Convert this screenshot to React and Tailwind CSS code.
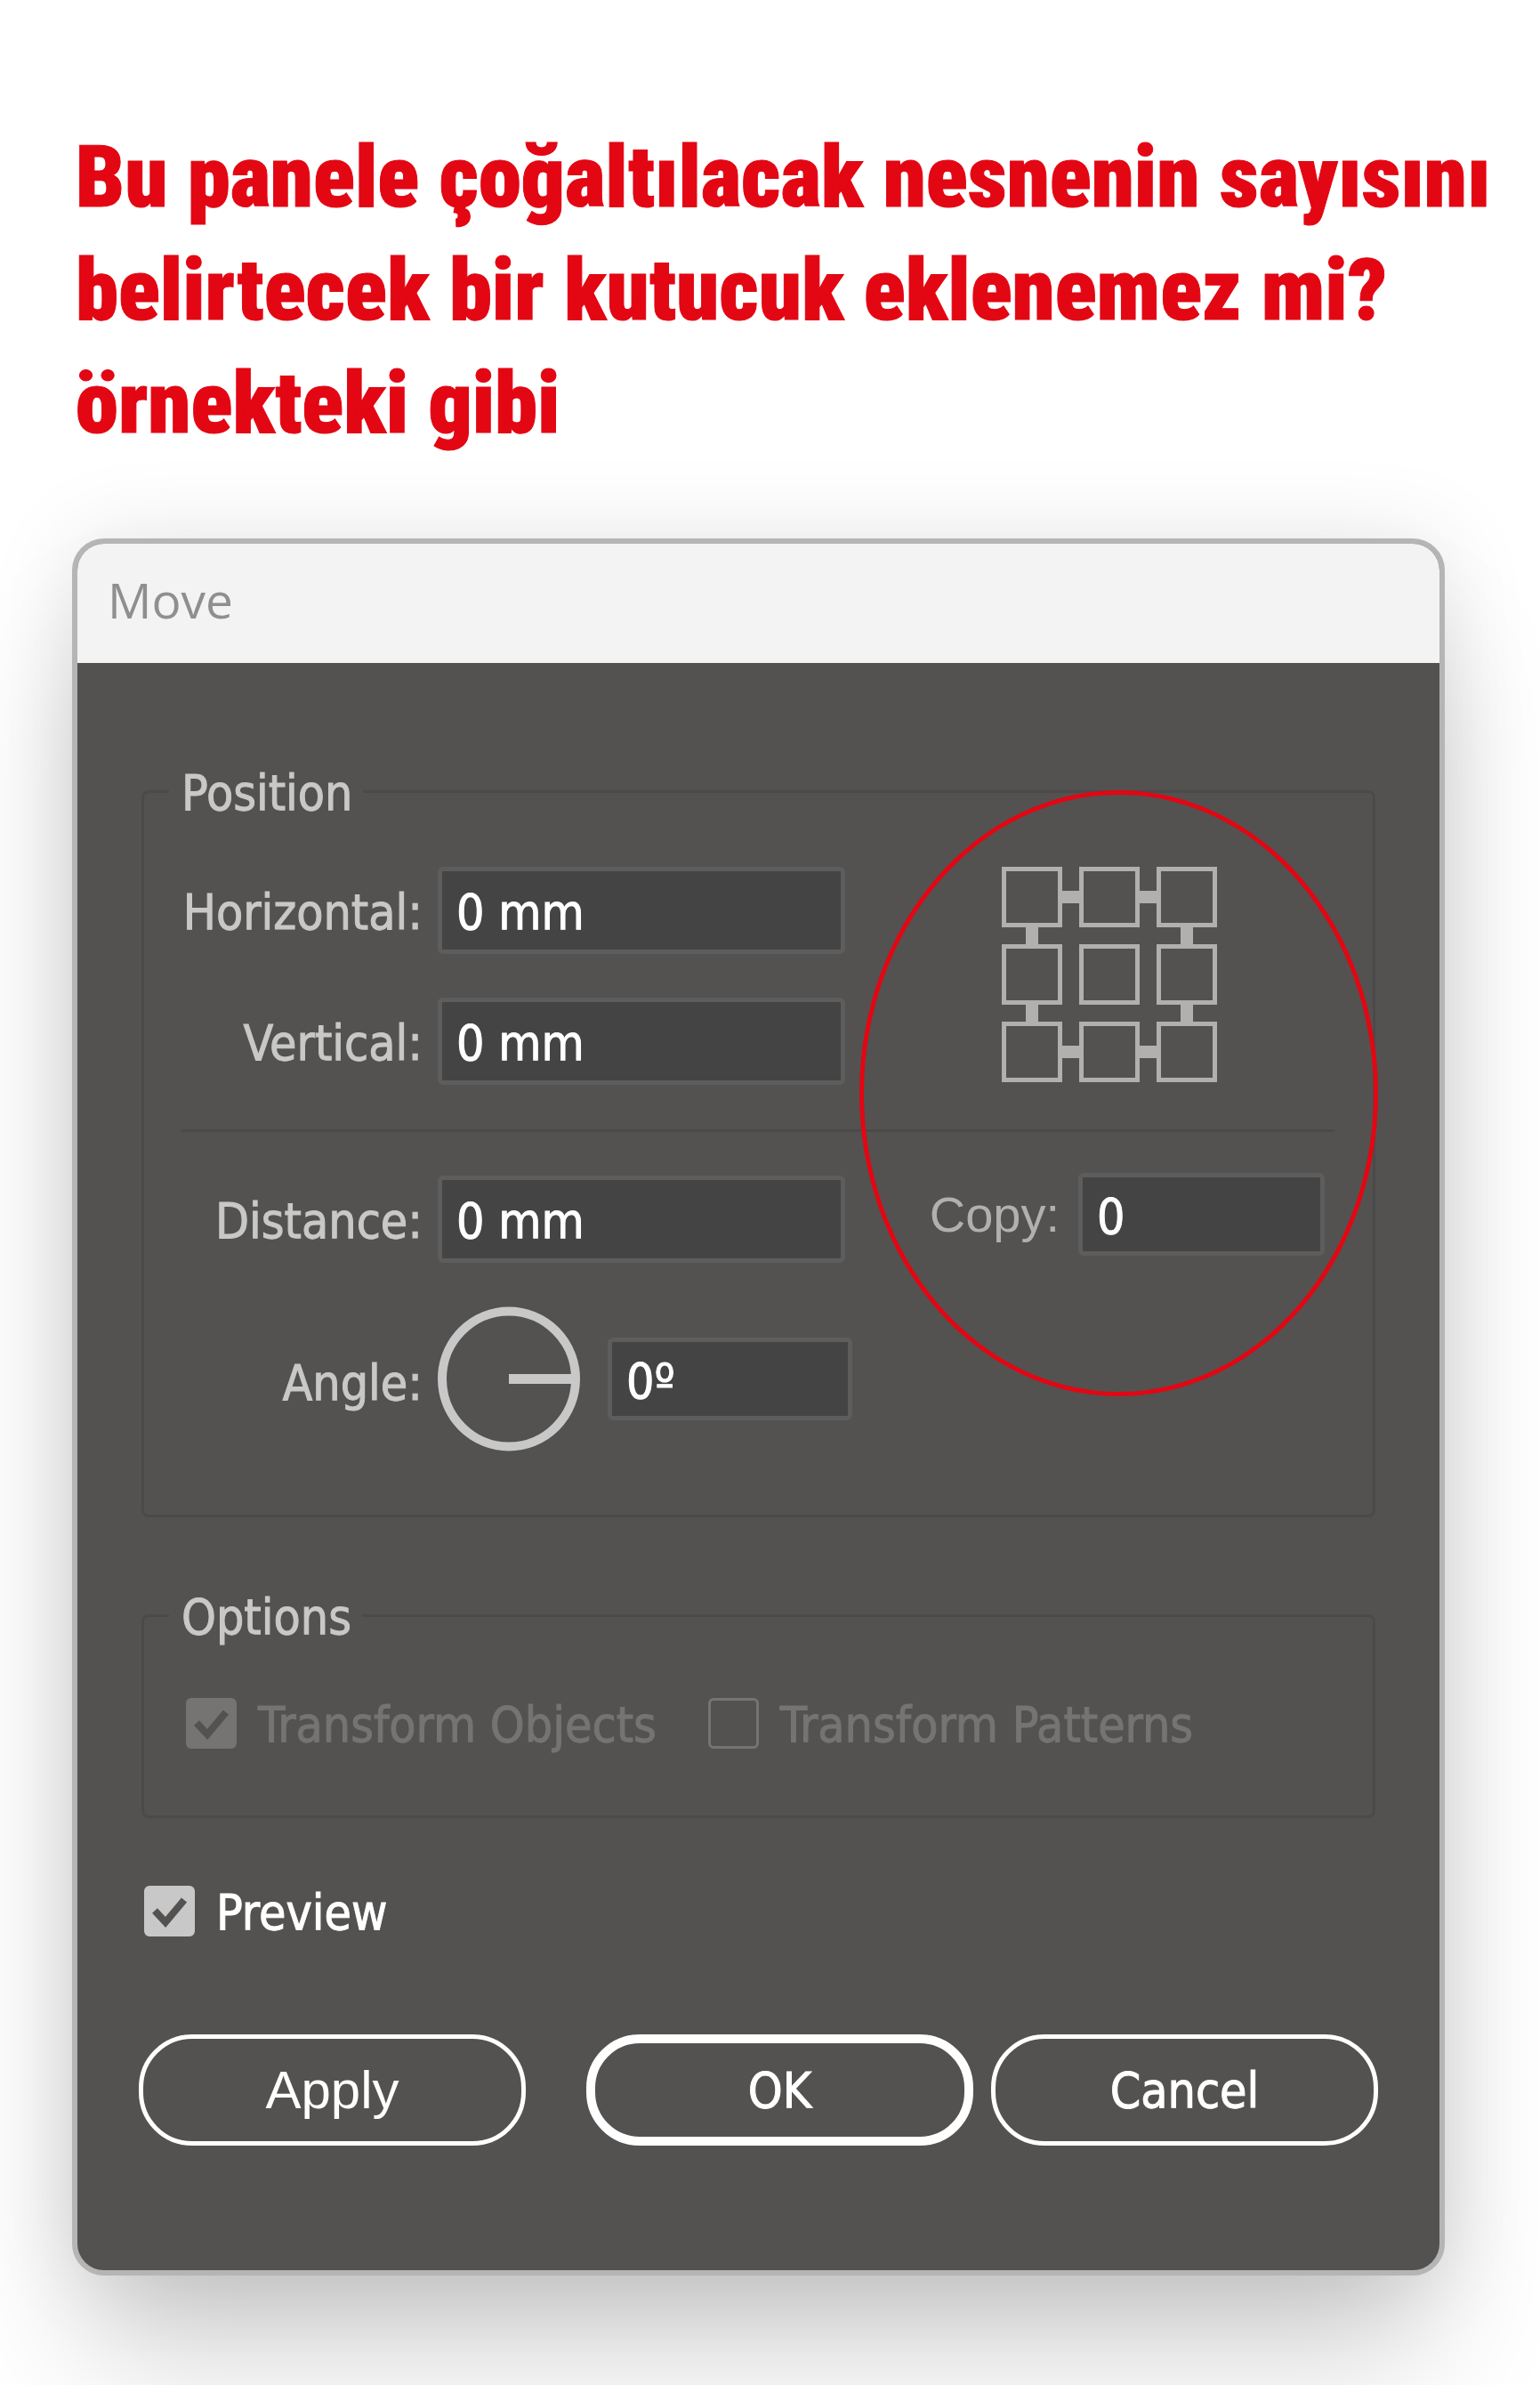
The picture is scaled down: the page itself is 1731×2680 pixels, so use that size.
import { useState } from "react";

const INPUT_CLASS = "min-w-0 rounded-md border-[5px] border-[#5d5d5d] bg-[#444444] pl-4 pt-1 text-white outline-none";

const Field = ({ id, label, value, onChange }) => {
    return (
        <div className="flex items-center gap-[17px]">
            <label htmlFor={id} className="w-[271px] pt-1 text-right">{label}</label>
            <input
                id={id}
                type="text"
                value={value}
                onChange={(e) => onChange(e.target.value)}
                className={`h-[98px] w-[458px] ${INPUT_CLASS}`}
            />
        </div>
    );
};

const Checkbox = ({ id, label, checked, onChange, disabled }) => {
    return (
        <div className={disabled ? "flex items-center gap-[24px] text-[#757473]" : "flex items-center gap-[24px] text-white"}>
            <span className="grid size-[57px] shrink-0">
                <input
                    id={id}
                    type="checkbox"
                    checked={checked}
                    disabled={disabled}
                    onChange={(e) => onChange(e.target.checked)}
                    className="col-start-1 row-start-1 size-full appearance-none rounded-md border-[3px] border-[#c8c8c8] checked:bg-[#c8c8c8] disabled:border-[#757473] disabled:checked:bg-[#757473]"
                />
                {checked && (
                    <svg viewBox="0 0 57 57" className="pointer-events-none col-start-1 row-start-1 size-full" aria-hidden="true">
                        <path d="M12 28 L24 41 L45 16" fill="none" stroke="#535250" strokeWidth="8" />
                    </svg>
                )}
            </span>
            <label htmlFor={id} className="pt-1 whitespace-nowrap">{label}</label>
        </div>
    );
};

// 3x3 reference point grid, outer squares are linked together
const AnchorGrid = () => {
    const steps = [0, 87, 174];
    return (
        <svg viewBox="0 0 242 242" className="size-[242px] shrink-0" aria-hidden="true">
            {steps.map((y) =>
                steps.map((x) => (
                    <rect key={`${x}-${y}`} x={x + 2.5} y={y + 2.5} width="63" height="63" fill="none" stroke="#b2b0af" strokeWidth="5" />
                ))
            )}
            {[0, 174].map((a) =>
                [68, 155].map((b) => (
                    <g key={`${a}-${b}`} fill="#b2b0af">
                        <rect x={b} y={a + 27} width="19" height="14" />
                        <rect x={a + 27} y={b} width="14" height="19" />
                    </g>
                ))
            )}
        </svg>
    );
};

const AngleDial = () => (
    <svg viewBox="0 0 160 163" className="h-[163px] w-[160px] shrink-0" aria-hidden="true">
        <ellipse cx="80" cy="81.5" rx="75" ry="76" fill="none" stroke="#c8c8c8" strokeWidth="10" />
        <rect x="80" y="76" width="76" height="11" fill="#c8c8c8" />
    </svg>
);

const Legend = ({ children }) => (
    <legend className="ml-[28px] pt-1 pl-[14px] pr-[12px]">{children}</legend>
);

const MoveDialog = () => {
    const [values, setValues] = useState({
        horizontal: "0 mm",
        vertical: "0 mm",
        distance: "0 mm",
        angle: "0º",
        copy: "0",
    });
    const [preview, setPreview] = useState(true);

    const update = (key) => (value) => setValues({ ...values, [key]: value });

    return (
        <section className="overflow-hidden rounded-[36px] border-[6px] border-[#b5b5b5] bg-[#535250] shadow-[0_0_100px_rgba(0,0,0,0.1),0_100px_150px_-20px_rgba(0,0,0,0.2)]">
            <header className="flex h-[134px] items-center bg-[#f3f3f3] px-[34px] pb-2">
                <h2 className="font-['Open_Sans',sans-serif] text-[55px] leading-[60px] text-[#8f8f8f]">Move</h2>
            </header>

            <form
                onSubmit={(e) => e.preventDefault()}
                className="px-[72px] pt-[112px] pb-[140px] font-['DejaVu_Sans_Condensed','DejaVu_Sans',sans-serif] text-[55px] leading-[60px] text-[#c8c8c8] [-webkit-text-stroke:1px_currentColor]"
            >
                {/* Position */}
                <fieldset className="relative rounded-lg border-[3px] border-[#4b4a49]">
                    <Legend>Position</Legend>
                    <div className="pt-[53px] pr-[43px] pb-[71px] pl-[42px]">
                        <div className="flex items-start justify-between">
                            <div className="flex flex-col gap-[49px]">
                                <Field id="horizontal" label="Horizontal:" value={values.horizontal} onChange={update("horizontal")} />
                                <Field id="vertical" label="Vertical:" value={values.vertical} onChange={update("vertical")} />
                            </div>
                            <div className="pr-[132px]">
                                <AnchorGrid />
                            </div>
                        </div>

                        <hr className="mt-[50px] border-t-[3px] border-[#4b4a49]" />

                        <div className="flex items-start justify-between pt-[46px]">
                            <div className="pt-[3px]">
                                <Field id="distance" label="Distance:" value={values.distance} onChange={update("distance")} />
                            </div>
                            <div className="flex items-center gap-[21px] pr-[11px]">
                                <label htmlFor="copy" className="font-['Liberation_Sans',Arial,sans-serif] text-[56px] text-[#b2b0af] [-webkit-text-stroke:0]">Copy:</label>
                                <input
                                    id="copy"
                                    type="text"
                                    value={values.copy}
                                    onChange={(e) => update("copy")(e.target.value)}
                                    className={`h-[93px] w-[277px] ${INPUT_CLASS}`}
                                />
                            </div>
                        </div>

                        <div className="flex items-center gap-[17px] pt-[49px]">
                            <label htmlFor="angle" className="w-[271px] pt-2 text-right">Angle:</label>
                            <AngleDial />
                            <input
                                id="angle"
                                type="text"
                                value={values.angle}
                                onChange={(e) => update("angle")(e.target.value)}
                                className={`ml-[14px] h-[93px] w-[275px] ${INPUT_CLASS}`}
                            />
                        </div>
                    </div>

                    {/* hand drawn marker over the new copy field */}
                    <div className="pointer-events-none absolute -top-[33px] -right-[6px] h-[681px] w-[583px] rounded-[50%] border-[5px] border-[#e30613]" />
                </fieldset>

                {/* Options */}
                <fieldset className="mt-[78px] rounded-lg border-[3px] border-[#4b4a49]">
                    <Legend>Options</Legend>
                    <div className="flex items-center gap-[58px] pt-[57px] pb-[72px] pl-[47px]">
                        <Checkbox id="objects" label="Transform Objects" checked disabled />
                        <Checkbox id="patterns" label="Transform Patterns" checked={false} disabled />
                    </div>
                </fieldset>

                <div className="mt-[72px] ml-[3px]">
                    <Checkbox id="preview" label="Preview" checked={preview} onChange={setPreview} />
                </div>

                <div className="-mx-[3px] mt-[107px] grid h-[125px] grid-cols-[1fr_68px_1fr_20px_1fr] text-white">
                    <button type="button" className="col-start-1 rounded-[60px] border-[5px] border-white font-['Liberation_Sans',Arial,sans-serif] text-[60px] [-webkit-text-stroke:0]">Apply</button>
                    <button type="submit" className="col-start-3 rounded-[60px] border-[10px] border-white">OK</button>
                    <button type="button" className="col-start-5 rounded-[60px] border-[5px] border-white">Cancel</button>
                </div>
            </form>
        </section>
    );
};

const App = () => {
    return (
        <div className="min-h-screen overflow-hidden bg-white">
            <h1 className="pt-[136px] pl-[85px] font-['Roboto_Condensed',Roboto,sans-serif] text-[97px] leading-[127px] font-black whitespace-nowrap text-[#e30613] [-webkit-text-stroke:1px_currentColor]">
                Bu panele çoğaltılacak nesnenin sayısını<br />
                belirtecek bir kutucuk eklenemez mi?<br />
                örnekteki gibi
            </h1>
            <main className="mt-[88px] mr-[107px] mb-[122px] ml-[81px]">
                <MoveDialog />
            </main>
        </div>
    );
};

export default App;
